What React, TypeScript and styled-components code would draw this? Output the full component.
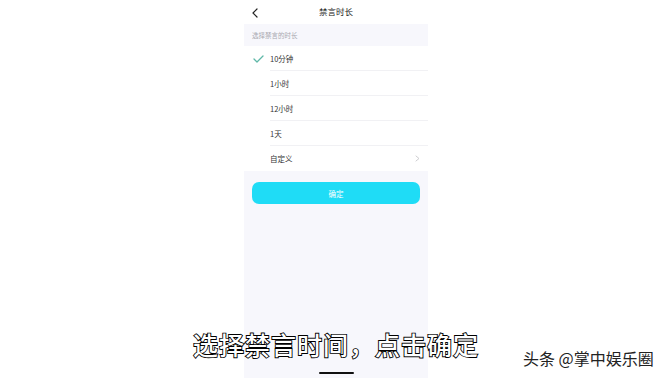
import styled, { createGlobalStyle } from "styled-components";

const GlobalStyle = createGlobalStyle`
    html, body {
        margin: 0;
        padding: 0;
        background: #ffffff;
        font-family: "Noto Sans CJK SC", "Noto Sans", sans-serif;
    }
`;

const options = ["10分钟", "1小时", "12小时", "1天"];

const ChevronLeft = () => (
    <svg width="8" height="10" viewBox="0 0 8 10">
        <path d="M6 1 L2 5 L6 9" fill="none" stroke="#222" strokeWidth="1.2" strokeLinecap="round" strokeLinejoin="round" />
    </svg>
);

const ChevronRight = () => (
    <svg width="5" height="7" viewBox="0 0 5 7">
        <path d="M1 1 L4 3.5 L1 6" fill="none" stroke="#c8c8cc" strokeWidth="0.9" strokeLinecap="round" strokeLinejoin="round" />
    </svg>
);

const Check = () => (
    <svg width="11" height="8" viewBox="0 0 11 8">
        <path d="M1 4 L4 7 L10 1" fill="none" stroke="#5fb8a8" strokeWidth="1.3" strokeLinecap="round" strokeLinejoin="round" />
    </svg>
);

export default function App() {
    return (
        <Page>
            <GlobalStyle />
            <Phone>
                <Header>
                    <BackBtn><ChevronLeft /></BackBtn>
                    <Title>禁言时长</Title>
                </Header>
                <SectionLabel>选择禁言的时长</SectionLabel>
                <List>
                    {options.map((item, i) => (
                        <Row key={item}>
                            <Mark>{i === 0 && <Check />}</Mark>
                            <RowText>{item}</RowText>
                        </Row>
                    ))}
                    <Row last>
                        <Mark />
                        <RowText>自定义</RowText>
                        <Arrow><ChevronRight /></Arrow>
                    </Row>
                </List>
                <ConfirmBtn>确定</ConfirmBtn>
                <Spacer />
                <HomeBar />
            </Phone>
            <Caption>选择禁言时间，点击确定</Caption>
            <Watermark>头条 @掌中娱乐圈</Watermark>
        </Page>
    );
}

const Page = styled.div`
    position: relative;
    width: 672px;
    height: 378px;
    display: flex;
    justify-content: center;
    overflow: hidden;
    background: #ffffff;
`;

const Phone = styled.div`
    width: 184px;
    height: 378px;
    background: #f7f7fc;
    display: flex;
    flex-direction: column;
`;

const Header = styled.div`
    position: relative;
    height: 24px;
    background: #ffffff;
    display: flex;
    align-items: center;
    justify-content: center;
`;

const BackBtn = styled.div`
    position: absolute;
    left: 7px;
    top: 8px;
    display: flex;
`;

const Title = styled.div`
    font-size: 8.5px;
    font-weight: 400;
    color: #222;
    margin-top: -2px;
`;

const SectionLabel = styled.div`
    height: 22px;
    padding-left: 8px;
    display: flex;
    align-items: center;
    font-size: 6.5px;
    color: #a8a8b0;
`;

const List = styled.div`
    background: #ffffff;
    display: flex;
    flex-direction: column;
`;

const Row = styled.div<{ last?: boolean }>`
    height: 25px;
    display: flex;
    align-items: center;
    position: relative;
    &::after {
        content: "";
        display: ${({ last }) => (last ? "none" : "block")};
        position: absolute;
        left: 26px;
        right: 0;
        bottom: 0;
        height: 1px;
        background: #f1f1f4;
    }
`;

const Mark = styled.div`
    width: 26px;
    display: flex;
    justify-content: center;
    padding-left: 2px;
    box-sizing: border-box;
`;

const RowText = styled.div`
    flex: 1;
    font-size: 7.5px;
    color: #333;
`;

const Arrow = styled.div`
    display: flex;
    padding-right: 8px;
`;

const ConfirmBtn = styled.div`
    margin: 11px 8px 0;
    height: 22px;
    border-radius: 7px;
    background: #1fdcf6;
    color: #ffffff;
    font-size: 7.5px;
    display: flex;
    align-items: center;
    justify-content: center;
`;

const Spacer = styled.div`
    flex: 1;
`;

const HomeBar = styled.div`
    width: 35px;
    height: 2px;
    border-radius: 1px;
    background: #111;
    align-self: center;
    margin-bottom: 4px;
`;

const Caption = styled.div`
    position: absolute;
    left: 0;
    right: 0;
    top: 326px;
    text-align: center;
    font-size: 25px;
    font-weight: 500;
    letter-spacing: 1px;
    color: #ffffff;
    -webkit-text-stroke: 1.8px #000;
    paint-order: stroke fill;
`;

const Watermark = styled.div`
    position: absolute;
    left: 523px;
    top: 346px;
    font-size: 16px;
    color: #222;
    text-shadow: 0 0 2px #fff;
`;
